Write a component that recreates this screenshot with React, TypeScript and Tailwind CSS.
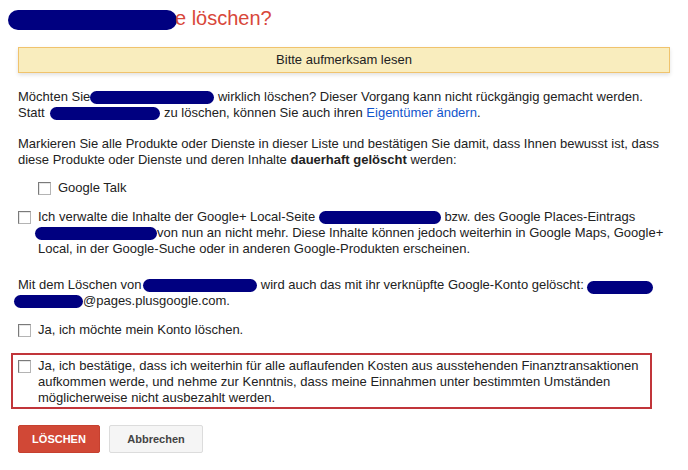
import React from 'react';

// Redaction marker drawn over private names
function Blob({ className }: { className: string }) {
  return <span className={`inline-block align-middle rounded-full bg-[#000080] ${className}`} />;
}

function Box() {
  return (
    <span className="mt-[2px] block w-[13px] h-[13px] shrink-0 border border-[#b4b4b4] border-t-[#7a7a7a] border-l-[#7a7a7a] bg-white shadow-[inset_1px_1px_0_#e6e6e6]" />
  );
}

function CheckRow({ children, className = '' }: { children: React.ReactNode; className?: string }) {
  return (
    <label className={`flex items-start gap-[7px] ${className}`}>
      <Box />
      <span>{children}</span>
    </label>
  );
}

export default function App() {
  return (
    <div
      className="w-[688px] h-[470px] bg-white px-[18px] text-[13px] leading-[16px] text-[#222] overflow-hidden"
      style={{ fontFamily: "'Liberation Sans', Arial, sans-serif" }}
    >
      <h1 className="pt-[6px] -ml-[10px] text-[20px] leading-[24px] font-normal text-[#d8473a] whitespace-nowrap">
        <Blob className="w-[169px] h-[20px] -mr-[2px]" />e löschen?
      </h1>

      <div className="mt-[17px] h-[26px] flex items-center justify-center border border-[#f0c36d] bg-[#f9edbe] shadow-[0_2px_4px_rgba(0,0,0,0.12)]">
        Bitte aufmerksam lesen
      </div>

      <p className="mt-[16px] whitespace-nowrap">
        Möchten Sie<Blob className="w-[124px] h-[13px]" /> wirklich löschen? Dieser Vorgang kann nicht rückgängig gemacht werden.
        <br />
        Statt <Blob className="w-[110px] h-[13px] ml-[2px]" /> zu löschen, können Sie auch ihren{' '}
        <a className="text-[#1155cc]">Eigentümer ändern</a>.
      </p>

      <p className="mt-[15px] whitespace-nowrap">
        Markieren Sie alle Produkte oder Dienste in dieser Liste und bestätigen Sie damit, dass Ihnen bewusst ist, dass
        <br />
        diese Produkte oder Dienste und deren Inhalte <b>dauerhaft gelöscht</b> werden:
      </p>

      <CheckRow className="mt-[12px] ml-[20px]">Google Talk</CheckRow>

      <CheckRow className="mt-[13px] whitespace-nowrap">
        Ich verwalte die Inhalte der Google+ Local-Seite <Blob className="w-[122px] h-[13px]" /> bzw. des Google Places-Eintrags
        <br />
        <Blob className="w-[122px] h-[13px] -ml-[3px]" />von nun an nicht mehr. Diese Inhalte können jedoch weiterhin in Google Maps, Google+
        <br />
        Local, in der Google-Suche oder in anderen Google-Produkten erscheinen.
      </CheckRow>

      <p className="mt-[20px] whitespace-nowrap">
        Mit dem Löschen von <Blob className="w-[114px] h-[13px] -ml-[2px]" /> wird auch das mit ihr verknüpfte Google-Konto gelöscht:{' '}
        <Blob className="w-[66px] h-[13px] relative top-[2px]" />
        <br />
        <Blob className="w-[69px] h-[13px] -ml-[4px]" />@pages.plusgoogle.com.
      </p>

      <CheckRow className="mt-[13px]">Ja, ich möchte mein Konto löschen.</CheckRow>

      <div className="mt-[15px] -ml-[7px] w-[641px] border-2 border-[#c1353a] pl-[5px] pt-[3px] pb-[1px]">
        <CheckRow className="whitespace-nowrap">
          Ja, ich bestätige, dass ich weiterhin für alle auflaufenden Kosten aus ausstehenden Finanztransaktionen
          <br />
          aufkommen werde, und nehme zur Kenntnis, dass meine Einnahmen unter bestimmten Umständen
          <br />
          möglicherweise nicht ausbezahlt werden.
        </CheckRow>
      </div>

      <div className="mt-[16px] flex gap-[9px]">
        <button className="w-[82px] h-[28px] rounded-[2px] border border-[#c6402f] bg-[#d14836] text-[11px] font-bold text-white">
          LÖSCHEN
        </button>
        <button className="w-[94px] h-[28px] rounded-[2px] border border-[#dcdcdc] bg-[#f5f5f5] text-[11px] font-bold text-[#444]">
          Abbrechen
        </button>
      </div>
    </div>
  );
}
